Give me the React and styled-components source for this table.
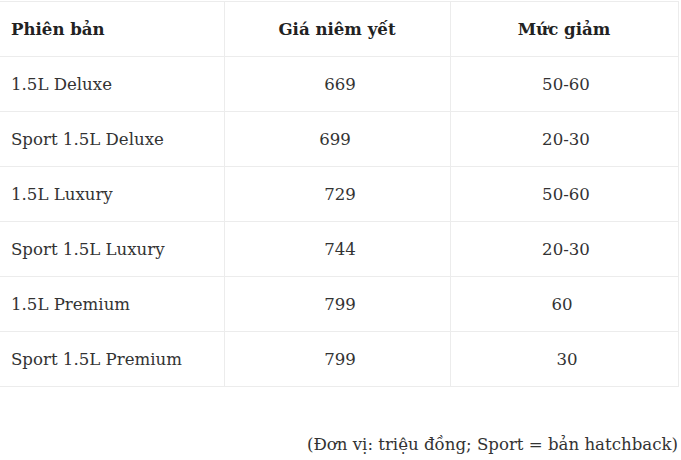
import React from "react";
import styled, { createGlobalStyle } from "styled-components";

const Global = createGlobalStyle`
  html, body { margin: 0; padding: 0; background: #fff; }
  body { font-family: "DejaVu Serif", "Liberation Serif", serif; color: #333; }
`;

const Page = styled.div`
  width: 681px;
  height: 460px;
  padding-top: 1px;
  box-sizing: border-box;
`;

const Table = styled.table`
  width: 678px;
  border-collapse: collapse;
  table-layout: fixed;
  font-size: 16.6px;
`;

const Cell = styled.td`
  height: 54px;
  padding: 0 0 0 ${(p) => (p.$left ? "11px" : "0")};
  border: 1px solid #ececec;
  border-left: ${(p) => (p.$first ? "none" : "1px solid #ececec")};
  text-align: ${(p) => (p.$left ? "left" : "center")};
  font-weight: ${(p) => (p.$head ? 700 : 400)};
  color: ${(p) => (p.$head ? "#222" : "#333")};
  vertical-align: middle;
  white-space: nowrap;
`;

const Shift = styled.span`
  display: inline-block;
  transform: translateX(${(p) => p.$dx || 0}px);
`;

const Caption = styled.p`
  margin: 48px 3px 0 0;
  text-align: right;
  font-size: 16.6px;
  color: #333;
`;

const rows = [
  ["1.5L Deluxe", "669", 3, "50-60", 2],
  ["Sport 1.5L Deluxe", "699", -2, "20-30", 2],
  ["1.5L Luxury", "729", 3, "50-60", 2],
  ["Sport 1.5L Luxury", "744", 3, "20-30", 2],
  ["1.5L Premium", "799", 3, "60", -2],
  ["Sport 1.5L Premium", "799", 3, "30", 3],
];

export default function App() {
  return (
    <Page>
      <Global />
      <Table>
        <colgroup>
          <col style={{ width: 224 }} />
          <col style={{ width: 226 }} />
          <col style={{ width: 228 }} />
        </colgroup>
        <thead>
          <tr>
            <Cell as="th" $head $left $first>Phiên bản</Cell>
            <Cell as="th" $head>Giá niêm yết</Cell>
            <Cell as="th" $head>Mức giảm</Cell>
          </tr>
        </thead>
        <tbody>
          {rows.map(([name, price, dp, disc, dd]) => (
            <tr key={name}>
              <Cell $left $first>{name}</Cell>
              <Cell><Shift $dx={dp}>{price}</Shift></Cell>
              <Cell><Shift $dx={dd}>{disc}</Shift></Cell>
            </tr>
          ))}
        </tbody>
      </Table>
      <Caption>(Đơn vị: triệu đồng; Sport = bản hatchback)</Caption>
    </Page>
  );
}
